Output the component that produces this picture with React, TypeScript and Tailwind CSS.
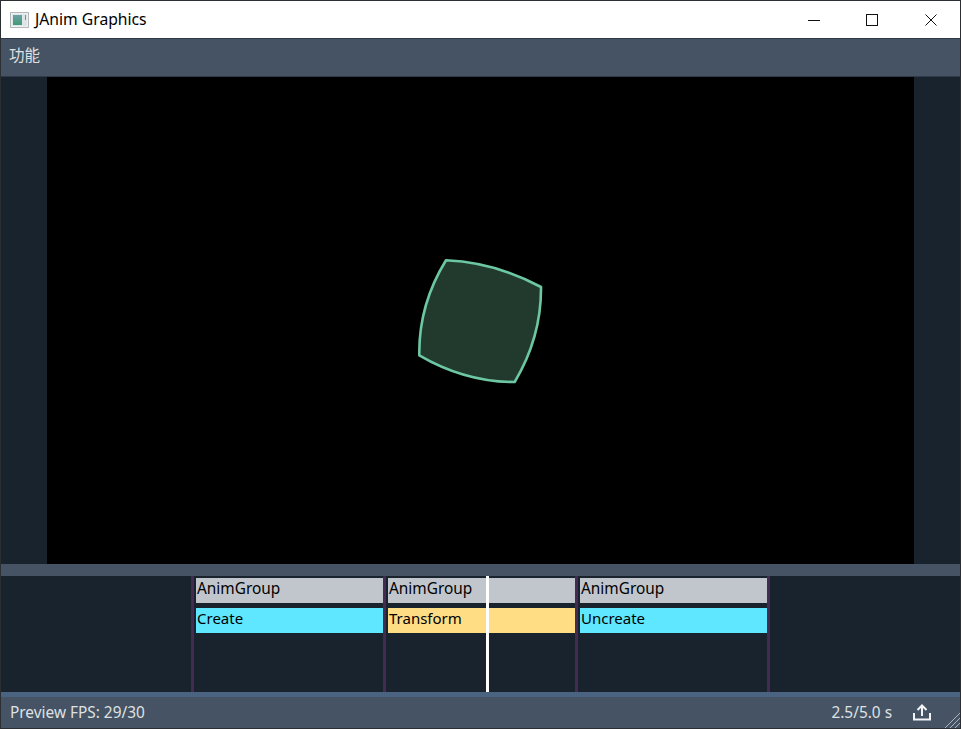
import React from 'react';

const clips = [
  { name: 'Create', color: 'bg-[#5fe7ff]' },
  { name: 'Transform', color: 'bg-[#ffdd85]' },
  { name: 'Uncreate', color: 'bg-[#5fe7ff]' },
];

const WindowIcon = () => (
  <svg width="19" height="16" viewBox="0 0 19 16" className="shrink-0">
    <defs>
      <linearGradient id="pane" x1="0" y1="0" x2="0" y2="1">
        <stop offset="0" stopColor="#6f9fa6" />
        <stop offset="1" stopColor="#3f9a78" />
      </linearGradient>
    </defs>
    <rect x="0.5" y="0.5" width="18" height="15" fill="#eef1f2" stroke="#b4b8bb" />
    <rect x="2" y="2" width="15" height="12" fill="#dfe6e8" />
    <rect x="3" y="3" width="9" height="10" fill="url(#pane)" />
    <rect x="15" y="3" width="1" height="5" fill="#5f9aa0" />
  </svg>
);

const TitleBar = () => (
  <div className="flex h-[37px] items-center bg-white text-black">
    <div className="ml-[9px]"><WindowIcon /></div>
    <span className="ml-[6px] text-[15.7px] leading-none">JAnim Graphics</span>
    <div className="ml-auto flex h-full">
      <button className="flex w-[58px] items-center justify-center">
        <svg width="12" height="12" viewBox="0 0 12 12"><path d="M0 6.5H12" stroke="#111" /></svg>
      </button>
      <button className="flex w-[58px] items-center justify-center">
        <svg width="12" height="12" viewBox="0 0 12 12"><rect x="0.5" y="0.5" width="11" height="11" fill="none" stroke="#111" /></svg>
      </button>
      <button className="flex w-[59px] items-center justify-center">
        <svg width="12" height="12" viewBox="0 0 12 12"><path d="M0.5 0.5L11.5 11.5M11.5 0.5L0.5 11.5" stroke="#111" /></svg>
      </button>
    </div>
  </div>
);

const Preview = () => (
  <div className="flex h-[487px] justify-center bg-[#19232d]">
    <div className="h-full w-[867px] bg-black">
      <svg viewBox="47 77 867 487" className="h-full w-full">
        <path
          d="M446 260.3Q495.8 262.5 541 287Q541.5 337 514.7 382Q465 382 419.3 355.3Q418.5 305 446 260.3Z"
          fill="#223a2d"
          stroke="#6cc7a3"
          strokeWidth="2.6"
          strokeLinejoin="round"
        />
      </svg>
    </div>
  </div>
);

const Timeline = () => (
  <div className="relative flex h-[116px] bg-[#19232d] pl-[190px]">
    {clips.map((clip) => (
      <div key={clip.name} className="flex w-[192px] border-l-[3px] border-[#432b52] pl-[2px] pt-[2px]">
        <div className="flex w-[187px] flex-col gap-[5px] leading-none text-black">
          <div className="flex h-[25px] items-center bg-[#c0c6cc] pb-[4px] pl-px text-[15.4px]">AnimGroup</div>
          <div className={`flex h-[25px] items-center pb-[4px] pl-px text-[15px] ${clip.color}`}>{clip.name}</div>
        </div>
      </div>
    ))}
    <div className="h-full w-[3px] border-l-[3px] border-[#432b52]" />
    <div className="absolute left-[485px] top-0 h-full w-[3px] bg-white" />
  </div>
);

const StatusBar = () => (
  <div className="relative flex h-[31px] items-center bg-[#455364] pl-[9px] text-[15.4px] leading-none text-[#dfe1e2]">
    <span>Preview FPS: 29/30</span>
    <span className="ml-auto">2.5/5.0 s</span>
    <svg width="18" height="17" viewBox="0 0 18 17" className="ml-[21px] mr-[29px]" fill="none" stroke="#f2f4f5" strokeWidth="2">
      <path d="M1 9V15.5H17V9" />
      <path d="M9 12V2M4.5 6L9 1.5L13.5 6" />
    </svg>
    <svg width="15" height="15" viewBox="0 0 15 15" className="absolute bottom-0 right-0" stroke="#aeb5bb" strokeWidth="1">
      <path d="M0 15L15 0M5 15L15 5M10 15L15 10" />
    </svg>
  </div>
);

export default function App() {
  return (
    <div
      className="h-[729px] w-[961px] overflow-hidden border border-[#2b2f33] bg-[#19232d]"
      style={{ fontFamily: '"Noto Sans", "Noto Sans CJK SC", sans-serif' }}
    >
      <TitleBar />
      <div className="flex h-[39px] items-center border-y border-[#2f3b49] bg-[#455364] pb-[3px] pl-[8px] text-[15.5px] leading-none text-[#dfe1e2]">
        功能
      </div>
      <Preview />
      <div className="h-[12px] bg-[#455364]" />
      <Timeline />
      <div className="h-[5px] bg-[#4a6380]" />
      <StatusBar />
    </div>
  );
}
